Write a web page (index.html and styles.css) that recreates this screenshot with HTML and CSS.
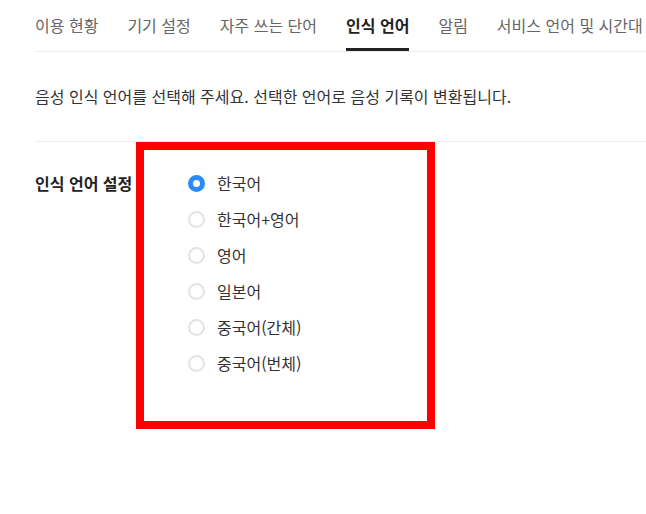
FILE: index.html
```html
<!DOCTYPE html>
<html lang="ko">
<head>
<meta charset="utf-8">
<link rel="stylesheet" href="styles.css">
</head>
<body>
<div class="page">
  <nav class="tabs">
    <span class="tab">이용 현황</span>
    <span class="tab">기기 설정</span>
    <span class="tab">자주 쓰는 단어</span>
    <span class="tab active">인식 언어</span>
    <span class="tab">알림</span>
    <span class="tab">서비스 언어 및 시간대</span>
  </nav>
  <p class="desc">음성 인식 언어를 선택해 주세요. 선택한 언어로 음성 기록이 변환됩니다.</p>
  <div class="setting">
    <div class="label">인식 언어 설정</div>
    <ul class="radios">
      <li class="radio checked"><span class="dot"></span><span>한국어</span></li>
      <li class="radio"><span class="dot"></span><span>한국어+영어</span></li>
      <li class="radio"><span class="dot"></span><span>영어</span></li>
      <li class="radio"><span class="dot"></span><span>일본어</span></li>
      <li class="radio"><span class="dot"></span><span>중국어(간체)</span></li>
      <li class="radio"><span class="dot"></span><span>중국어(번체)</span></li>
    </ul>
    <div class="highlight"></div>
  </div>
</div>
</body>
</html>
```
FILE: styles.css
```css
html, body {
  margin: 0;
  padding: 0;
  background: #fff;
}
body {
  font-family: "Noto Sans CJK KR", "Noto Sans", sans-serif;
  color: #222;
  font-size: 16px;
}
.page {
  margin-left: 35px;
  overflow: hidden;
}
.tabs {
  display: flex;
  height: 52px;
  box-sizing: border-box;
  border-bottom: 1px solid #ececec;
  white-space: nowrap;
  overflow: hidden;
}
.tab {
  flex: none;
  display: flex;
  align-items: center;
  box-sizing: border-box;
  height: 51px;
  padding-top: 1px;
  border-bottom: 3px solid transparent;
  margin-right: 29px;
  color: #666;
  font-size: 16px;
  line-height: 20px;
}
.tab.active {
  color: #222;
  font-weight: bold;
  border-bottom-color: #222;
}
.desc {
  margin: 0;
  padding: 33px 0 34px;
  line-height: 22px;
  font-size: 16px;
  color: #333;
  border-bottom: 1px solid #ececec;
}
.setting {
  position: relative;
  display: flex;
  padding-top: 23px;
  height: 300px;
}
.label {
  width: 153px;
  flex: none;
  font-weight: bold;
  line-height: 36px;
  color: #222;
}
.radios {
  list-style: none;
  margin: 0;
  padding: 0;
}
.radio {
  display: flex;
  align-items: center;
  height: 36px;
  gap: 12px;
  color: #333;
}
.dot {
  flex: none;
  width: 17px;
  height: 17px;
  box-sizing: border-box;
  border-radius: 50%;
  border: 2px solid #e3e3e3;
  background: #fff;
}
.radio.checked .dot {
  border: 5.5px solid #2a8af6;
  background: #fff;
}
.highlight {
  position: absolute;
  left: 101px;
  top: 0;
  width: 299px;
  height: 287px;
  box-sizing: border-box;
  border: 8px solid #ff0000;
}
```
